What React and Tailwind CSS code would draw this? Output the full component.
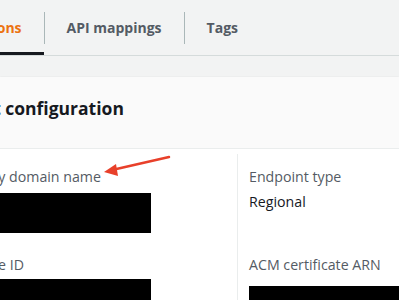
import React from 'react';

const font = { fontFamily: '"Open Sans", "Noto Sans", sans-serif' };

const Tab = ({ label, active }) => (
  <div className={`relative h-full flex items-center px-[22px] ${active ? 'text-[#ec7211]' : 'text-[#545b64]'}`}>
    <span className="text-[14px] font-bold whitespace-nowrap">{label}</span>
    {active && <div className="absolute left-0 right-0 bottom-0 h-[3px] bg-[#16191f]" />}
  </div>
);

const Divider = () => <div className="w-px h-[32px] bg-[#aab7b8]" />;

const Field = ({ label, children }) => (
  <div className="flex flex-col">
    <div className="text-[14.2px] text-[#545b64] leading-[22px] whitespace-nowrap">{label}</div>
    {children}
  </div>
);

export default function App() {
  return (
    <div className="relative w-[399px] h-[300px] overflow-hidden bg-[#f2f3f3]" style={font}>
      {/* tabs */}
      <div className="h-[56px] border-b border-[#d5dbdb]">
        <div className="flex items-center h-[55px] -ml-[104px]">
          <Tab label="Configurations" active />
          <Divider />
          <Tab label="API mappings" />
          <Divider />
          <Tab label="Tags" />
        </div>
      </div>

      {/* card */}
      <div className="mt-[21px] bg-white shadow-[0_1px_2px_rgba(0,28,36,0.3)]">
        <div className="h-[72px] pb-[8px] bg-[#fafafa] border-b border-[#eaeded] flex items-center -ml-[78px]">
          <h2 className="text-[17.5px] font-bold text-[#16191f] whitespace-nowrap">Endpoint configuration</h2>
        </div>
        <div className="flex pt-[5px] h-[200px]">
          <div className="w-[237px] shrink-0 flex flex-col pt-[12px]">
            <div className="-ml-[77px] flex flex-col gap-[21px]">
              <Field label="API Gateway domain name">
                <div className="mt-[5px] w-[228px] h-[40px] bg-black" />
              </Field>
              <Field label="Hosted zone ID">
                <div className="mt-[3px] w-[228px] h-[40px] bg-black" />
              </Field>
            </div>
          </div>
          <div className="border-l border-[#eaeded] flex-1 pl-[11px] pt-[12px] flex flex-col gap-[41px]">
            <Field label="Endpoint type">
              <div className="text-[14.2px] text-[#16191f] leading-[22px] mt-[3px]">Regional</div>
            </Field>
            <Field label="ACM certificate ARN">
              <div className="mt-[10px] w-[170px] h-[40px] bg-black" />
            </Field>
          </div>
        </div>
      </div>

      {/* annotation arrow */}
      <svg className="absolute left-0 top-0" width="399" height="300" viewBox="0 0 399 300">
        <line x1="169" y1="157" x2="112" y2="170" stroke="#e8402a" strokeWidth="2.5" strokeLinecap="round" />
        <polygon points="104,172 116,164 118,176" fill="#e8402a" />
      </svg>
    </div>
  );
}
